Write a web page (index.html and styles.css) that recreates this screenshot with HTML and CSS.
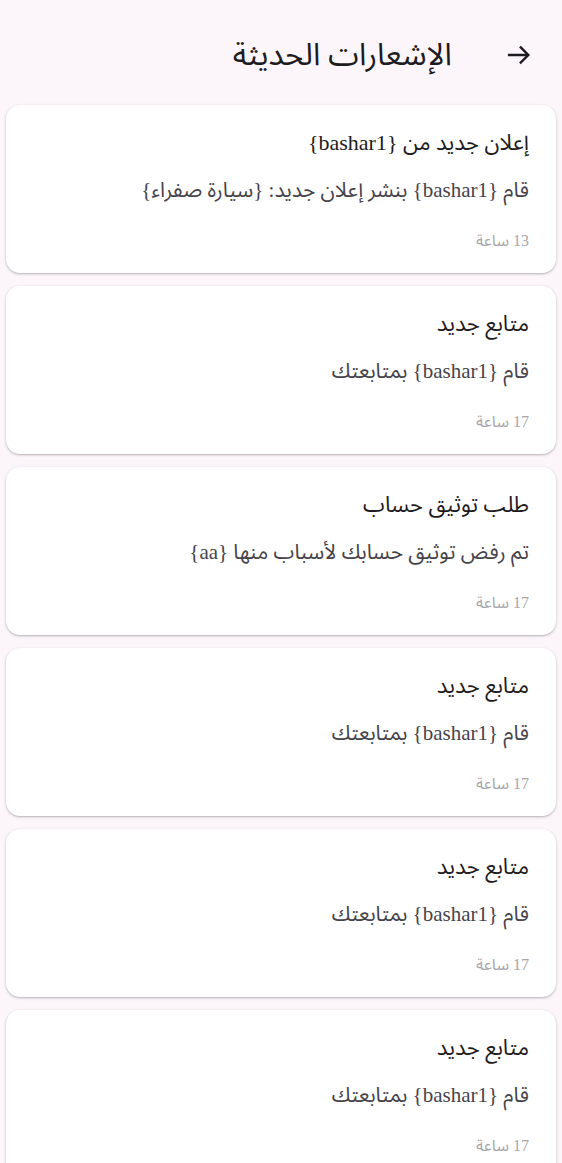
FILE: index.html
```html
<!DOCTYPE html>
<html lang="ar" dir="rtl">
<head>
<meta charset="utf-8">
<link rel="stylesheet" href="styles.css">
</head>
<body>
<header class="top-bar">
  <button class="back" aria-label="رجوع">
    <svg width="28" height="28" viewBox="0 0 24 24"><path d="M3.5 12h16M13.5 5.5l6.5 6.5-6.5 6.5" fill="none" stroke="#1d1b20" stroke-width="2" stroke-linecap="square"/></svg>
  </button>
  <h1 class="title">الإشعارات الحديثة</h1>
</header>
<main class="list">
  <article class="card">
    <h2 class="card-title">إعلان جديد من {bashar1}</h2>
    <p class="card-body">قام {bashar1} بنشر إعلان جديد: {سيارة صفراء}</p>
    <p class="card-time">13 ساعة</p>
  </article>
  <article class="card">
    <h2 class="card-title">متابع جديد</h2>
    <p class="card-body">قام {bashar1} بمتابعتك</p>
    <p class="card-time">17 ساعة</p>
  </article>
  <article class="card">
    <h2 class="card-title">طلب توثيق حساب</h2>
    <p class="card-body">تم رفض توثيق حسابك لأسباب منها {aa}</p>
    <p class="card-time">17 ساعة</p>
  </article>
  <article class="card">
    <h2 class="card-title">متابع جديد</h2>
    <p class="card-body">قام {bashar1} بمتابعتك</p>
    <p class="card-time">17 ساعة</p>
  </article>
  <article class="card">
    <h2 class="card-title">متابع جديد</h2>
    <p class="card-body">قام {bashar1} بمتابعتك</p>
    <p class="card-time">17 ساعة</p>
  </article>
  <article class="card">
    <h2 class="card-title">متابع جديد</h2>
    <p class="card-body">قام {bashar1} بمتابعتك</p>
    <p class="card-time">17 ساعة</p>
  </article>
</main>
</body>
</html>
```
FILE: styles.css
```css
html, body {
  margin: 0;
  padding: 0;
  background: #fcf6fb;
  height: 1163px;
  overflow: hidden;
}
body {
  font-family: "Liberation Serif", "Noto Sans Arabic", "DejaVu Sans", serif;
  color: #1d1b20;
}
.top-bar {
  display: flex;
  align-items: center;
  height: 82px;
  padding: 28px 29px 0 0;
  box-sizing: border-box;
  gap: 53px;
}
.back {
  background: none;
  border: 0;
  padding: 0;
  display: flex;
  width: 28px;
  height: 28px;
}
.title {
  margin: 0;
  font-family: "Noto Sans Arabic", "DejaVu Sans", sans-serif;
  font-size: 31px;
  font-weight: 400;
  line-height: 40px;
}
.list {
  display: flex;
  flex-direction: column;
  gap: 13px;
  padding: 23px 6px 0;
}
.card {
  background: #fff;
  border-radius: 14px;
  box-shadow: 0 1px 3px rgba(0,0,0,0.22), 0 1px 1px rgba(0,0,0,0.08);
  height: 168px;
  box-sizing: border-box;
  padding: 23px 27px 0;
}
.card-title {
  margin: 0;
  font-size: 22px;
  font-weight: 400;
  line-height: 30px;
  color: #1d1b20;
}
.card-body {
  margin: 17px 0 0;
  font-size: 21px;
  line-height: 30px;
  color: #46434b;
}
.card-time {
  margin: 26px 0 0;
  font-size: 16px;
  line-height: 20px;
  color: #a8a6ab;
}
```
